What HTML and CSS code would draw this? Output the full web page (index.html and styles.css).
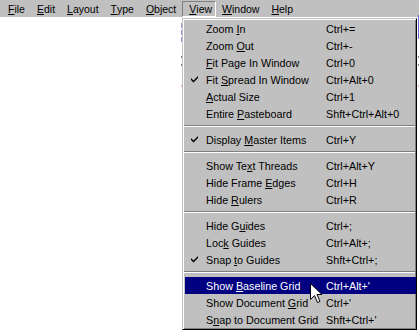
FILE: index.html
```html
<!DOCTYPE html>
<html lang="en">
<head>
  <meta charset="UTF-8" />
  <title>View menu</title>
  <link rel="stylesheet" href="styles.css">
</head>
<body>

  <!-- Application menu bar -->
  <nav class="menubar">
    <span class="menubar-item"><u>F</u>ile</span>
    <span class="menubar-item"><u>E</u>dit</span>
    <span class="menubar-item"><u>L</u>ayout</span>
    <span class="menubar-item"><u>T</u>ype</span>
    <span class="menubar-item"><u>O</u>bject</span>
    <span class="menubar-item open"><u>V</u>iew</span>
    <span class="menubar-item"><u>W</u>indow</span>
    <span class="menubar-item"><u>H</u>elp</span>
  </nav>

  <main class="canvas">
    <!-- page guides peeking out around the menu -->
    <span class="guide guide-blue guide-left"></span>
    <span class="guide guide-blue guide-right"></span>
    <span class="tick tick-left tick-a"></span>
    <span class="tick tick-left tick-b"></span>
    <span class="tick tick-right tick-a"></span>
    <span class="tick tick-right tick-b"></span>
    <span class="tick pink tick-left tick-c"></span>
    <span class="tick pink tick-right tick-c"></span>

    <!-- View dropdown -->
    <div class="dropdown">
      <div class="item"><span class="check"></span><span>Zoom <u>I</u>n</span><span>Ctrl+=</span></div>
      <div class="item"><span class="check"></span><span>Zoom <u>O</u>ut</span><span>Ctrl+-</span></div>
      <div class="item"><span class="check"></span><span><u>F</u>it Page In Window</span><span>Ctrl+0</span></div>
      <div class="item checked"><span class="check"><svg width="7" height="7" viewBox="0 0 7 7"><path d="M0 2 L2.5 4.5 L7 0 L7 2 L2.5 6.5 L0 4 Z" fill="#000"/></svg></span><span>Fit <u>S</u>pread In Window</span><span>Ctrl+Alt+0</span></div>
      <div class="item"><span class="check"></span><span><u>A</u>ctual Size</span><span>Ctrl+1</span></div>
      <div class="item"><span class="check"></span><span>Entire <u>P</u>asteboard</span><span>Shft+Ctrl+Alt+0</span></div>
      <div class="separator"></div>
      <div class="item checked"><span class="check"><svg width="7" height="7" viewBox="0 0 7 7"><path d="M0 2 L2.5 4.5 L7 0 L7 2 L2.5 6.5 L0 4 Z" fill="#000"/></svg></span><span>Display <u>M</u>aster Items</span><span>Ctrl+Y</span></div>
      <div class="separator"></div>
      <div class="item"><span class="check"></span><span>Show Te<u>x</u>t Threads</span><span>Ctrl+Alt+Y</span></div>
      <div class="item"><span class="check"></span><span>Hide Frame <u>E</u>dges</span><span>Ctrl+H</span></div>
      <div class="item"><span class="check"></span><span>Hide <u>R</u>ulers</span><span>Ctrl+R</span></div>
      <div class="separator"></div>
      <div class="item"><span class="check"></span><span>Hide G<u>u</u>ides</span><span>Ctrl+;</span></div>
      <div class="item"><span class="check"></span><span>Loc<u>k</u> Guides</span><span>Ctrl+Alt+;</span></div>
      <div class="item checked"><span class="check"><svg width="7" height="7" viewBox="0 0 7 7"><path d="M0 2 L2.5 4.5 L7 0 L7 2 L2.5 6.5 L0 4 Z" fill="#000"/></svg></span><span>Snap <u>t</u>o Guides</span><span>Shft+Ctrl+;</span></div>
      <div class="separator"></div>
      <div class="item active"><span class="check"></span><span>Show <u>B</u>aseline Grid</span><span>Ctrl+Alt+'</span></div>
      <div class="item"><span class="check"></span><span>Show Document <u>G</u>rid</span><span>Ctrl+'</span></div>
      <div class="item"><span class="check"></span><span>S<u>n</u>ap to Document Grid</span><span>Shft+Ctrl+'</span></div>
    </div>

    <!-- mouse pointer -->
    <svg class="cursor" width="13" height="21" viewBox="0 0 13 21">
      <path d="M0.5 0.5 L0.5 16.5 L4.5 12.5 L7.5 19.5 L10 18.5 L7 11.5 L12 11.5 Z" fill="#fff" stroke="#000" stroke-width="1" stroke-linejoin="miter"/>
    </svg>
  </main>

</body>
</html>
```

FILE: styles.css
```css
* {
  box-sizing: border-box;
}

body {
  margin: 0;
  padding: 0;
  width: 419px;
  height: 335px;
  overflow: hidden;
  background: #fff;
  font-family: 'Liberation Sans', Arial, sans-serif;
  font-size: 10.75px;
  color: #000;
}

u {
  text-decoration: underline;
  text-underline-offset: 1px;
}

.menubar {
  display: flex;
  height: 17px;
  padding-left: 2px;
  background: #c0c0c0;
  font-size: 10.5px;
}

.menubar-item {
  display: flex;
  align-items: center;
  padding: 0 6px;
}

.menubar-item.open {
  margin-top: 1px;
  padding: 0 3px 0 6px;
  border: 1px solid;
  border-color: #808080 #fff #fff #808080;
}

.canvas {
  position: relative;
  height: 318px;
  background: #fff;
}

.dropdown {
  position: absolute;
  left: 182px;
  top: 1px;
  width: 235px;
  padding: 1px 0 1px 2px;
  background: #c0c0c0;
  border: 1px solid;
  border-color: #c0c0c0 #000 #000 #c0c0c0;
  box-shadow: inset 1px 1px 0 #fff, inset -1px -1px 0 #808080;
}

.item {
  display: grid;
  grid-template-columns: 21px 120px 1fr;
  height: 17px;
  align-items: center;
  white-space: nowrap;
}

.item.active {
  background: #000080;
  color: #fff;
}

.check {
  display: flex;
  justify-content: center;
  padding-right: 2px;
}

.check svg {
  display: block;
}

.separator {
  height: 9px;
  padding-top: 3px;
  margin: 0 1px 0 -1px;
}

.separator::before {
  content: '';
  display: block;
  height: 1px;
  background: #808080;
  border-bottom: 1px solid #fff;
  box-sizing: content-box;
}

.cursor {
  position: absolute;
  left: 310px;
  top: 266px;
}

.guide {
  position: absolute;
  width: 1px;
}

.guide-blue {
  top: 6px;
  height: 20px;
  background: repeating-linear-gradient(to bottom, #9a9ae6 0 5px, transparent 5px 7px);
}

.guide-left {
  left: 181px;
}

.guide-right {
  left: 418px;
  top: -2px;
  height: 24px;
  background: #6a6ad0;
}

.tick {
  position: absolute;
  width: 1px;
  height: 2px;
  background: #808080;
}

.tick-left {
  left: 181px;
}

.tick-right {
  left: 418px;
}

.tick-a {
  top: 39px;
}

.tick-b {
  top: 47px;
}

.tick-c {
  top: 68px;
}

.pink {
  background: #f0a0e0;
}
```
